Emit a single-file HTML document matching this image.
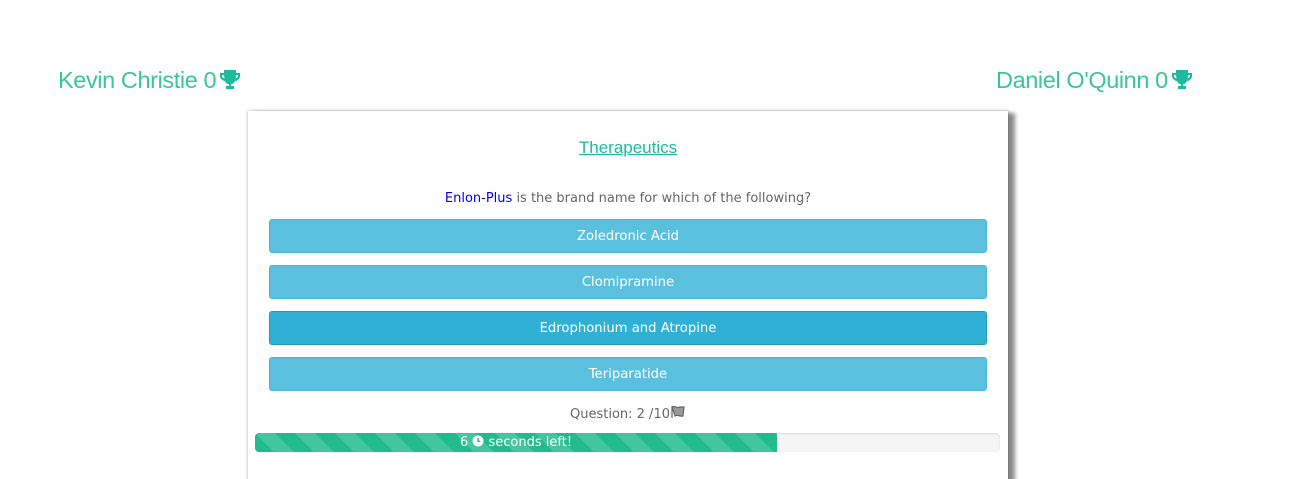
<!DOCTYPE html>
<html><head><style>
html,body{margin:0;padding:0;background:#fff;width:1300px;height:479px;overflow:hidden;position:relative;font-family:"DejaVu Sans","Liberation Sans",sans-serif}
.name{position:absolute;top:67px;font-family:"Liberation Sans",sans-serif;font-size:23.5px;color:#3cc49b;letter-spacing:-0.4px}
.name svg{vertical-align:-2px;margin-left:3px}
.card{position:absolute;left:248px;top:111px;width:760px;height:380px;background:#fff;box-shadow:0 0 3px rgba(0,0,0,.35),7px 2px 4px rgba(0,0,0,.45)}
.title{position:absolute;left:0;width:760px;top:27px;text-align:center;font-family:"Liberation Sans",sans-serif;font-size:17px;color:#1abc9c;text-decoration:underline}
.q{position:absolute;left:0;width:760px;top:80px;text-align:center;font-size:13px;color:#666}
.q span{color:#0000ee}
.btn{position:absolute;left:21px;width:716px;height:32px;background:#5bc0de;border:1px solid #46b8da;border-radius:3px;color:#fff;font-size:13.2px;text-align:center;line-height:34px;box-sizing:content-box}
.btn.a{background:#31b0d5;border-color:#269abc}
.cnt{position:absolute;left:0;width:760px;top:294px;text-align:center;font-size:13px;color:#666}
.bar{position:absolute;left:7px;top:322px;width:745px;height:19px;background:#f5f5f5;border-radius:4px;box-shadow:inset 0 1px 2px rgba(0,0,0,.1);overflow:hidden}
.fill{width:522px;height:19px;background-color:#22bb8e;background-image:linear-gradient(45deg,rgba(255,255,255,.15) 25%,transparent 25%,transparent 50%,rgba(255,255,255,.15) 50%,rgba(255,255,255,.15) 75%,transparent 75%,transparent);background-size:40px 40px}
.bt{position:absolute;left:0;width:522px;top:2px;text-align:center;color:#fff;font-size:13px}
</style></head><body>
<div class="name" style="left:58px">Kevin Christie 0<svg width="22" height="22" viewBox="0 0 22 22"><path fill="#1abc9c" d="M5 2h12v3h4v3c0 3-3 5-5 5-1 2-2 3-4 3v2h3v3H7v-3h3v-2c-2 0-3-1-4-3-2 0-5-2-5-5V5h4zM3 7v1c0 1 1 2 2.5 2.5L5 7zm16 0h-2l-.5 3.5C18 10 19 9 19 8z"/></svg></div>
<div class="name" style="left:996px">Daniel O'Quinn 0<svg width="22" height="22" viewBox="0 0 22 22"><path fill="#1abc9c" d="M5 2h12v3h4v3c0 3-3 5-5 5-1 2-2 3-4 3v2h3v3H7v-3h3v-2c-2 0-3-1-4-3-2 0-5-2-5-5V5h4zM3 7v1c0 1 1 2 2.5 2.5L5 7zm16 0h-2l-.5 3.5C18 10 19 9 19 8z"/></svg></div>
<div class="card">
<div class="title">Therapeutics</div>
<div class="q"><span>Enlon-Plus</span> is the brand name for which of the following?</div>
<div class="btn" style="top:108px">Zoledronic Acid</div>
<div class="btn" style="top:154px">Clomipramine</div>
<div class="btn a" style="top:200px">Edrophonium and Atropine</div>
<div class="btn" style="top:246px">Teriparatide</div>
<div class="cnt">Question: 2 /10<svg width="16" height="14" viewBox="0 0 16 14" style="vertical-align:-1px"><path d="M2 1v12M2 2c3-2 5 2 8 0l4 0-1 9c-3 1-5-2-8 0z" fill="#999" stroke="#666" stroke-width="1.2"/></svg></div>
<div class="bar"><div class="fill"></div><div class="bt">6 <svg width="12" height="12" viewBox="0 0 12 12" style="vertical-align:-1px"><circle cx="6" cy="6" r="5.5" fill="#fff"/><path d="M6 3v3.3h2.3" stroke="#22bb8e" stroke-width="1.4" fill="none"/></svg> seconds left!</div></div>
</div>
</body></html>
